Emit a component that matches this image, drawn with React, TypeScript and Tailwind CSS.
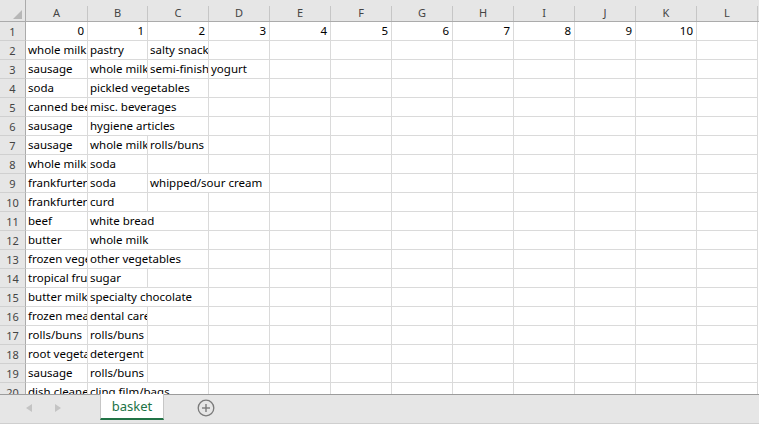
import React from "react";

type Cell = { t: string; w: string; right?: boolean; last?: boolean };

const COLS = ["A", "B", "C", "D", "E", "F", "G", "H", "I", "J", "K", "L"];
const COLW = [
  "w-[62px]",
  "w-[60px]",
  "w-[61px]",
  "w-[61px]",
  "w-[61px]",
  "w-[61px]",
  "w-[61px]",
  "w-[61px]",
  "w-[61px]",
  "w-[61px]",
  "w-[61px]",
  "w-[61px]",
];

// each row: list of [text, span] for columns A.. ; empty string = empty cell
type Spec = [string, number][];

const rows: Spec[] = [
  [["0", 1], ["1", 1], ["2", 1], ["3", 1], ["4", 1], ["5", 1], ["6", 1], ["7", 1], ["8", 1], ["9", 1], ["10", 1], ["", 1]],
  [["whole milk", 1], ["pastry", 1], ["salty snack", 1]],
  [["sausage", 1], ["whole milk", 1], ["semi-finished bread", 1], ["yogurt", 1]],
  [["soda", 1], ["pickled vegetables", 2]],
  [["canned beer", 1], ["misc. beverages", 2]],
  [["sausage", 1], ["hygiene articles", 2]],
  [["sausage", 1], ["whole milk", 1], ["rolls/buns", 1]],
  [["whole milk", 1], ["soda", 1]],
  [["frankfurter", 1], ["soda", 1], ["whipped/sour cream", 2]],
  [["frankfurter", 1], ["curd", 1]],
  [["beef", 1], ["white bread", 2]],
  [["butter", 1], ["whole milk", 2]],
  [["frozen vegetables", 1], ["other vegetables", 2]],
  [["tropical fruit", 1], ["sugar", 1]],
  [["butter milk", 1], ["specialty chocolate", 2]],
  [["frozen meals", 1], ["dental care", 1]],
  [["rolls/buns", 1], ["rolls/buns", 1]],
  [["root vegetables", 1], ["detergent", 1]],
  [["sausage", 1], ["rolls/buns", 1]],
  [["dish cleaner", 1], ["cling film/bags", 2]],
];

const SPAN2: Record<number, string> = {
  1: "w-[121px]",
  2: "w-[122px]",
};

function buildRow(spec: Spec, numeric: boolean): Cell[] {
  const cells: Cell[] = [];
  let col = 0;
  for (const [t, span] of spec) {
    const w = span === 2 ? SPAN2[col] : COLW[col];
    cells.push({ t, w, right: numeric });
    col += span;
  }
  while (col < 12) {
    cells.push({ t: "", w: COLW[col] });
    col++;
  }
  return cells;
}

const font = { fontFamily: '"Noto Sans", "Noto Sans CJK KR", sans-serif' };

export default function App() {
  return (
    <div className="w-[759px] h-[424px] bg-white flex flex-col overflow-hidden select-none" style={font}>
      {/* grid area */}
      <div className="h-[394px] overflow-hidden flex flex-col">
        {/* column header */}
        <div className="flex h-[22px] shrink-0 bg-[#e6e6e6] border-b border-[#ababab]">
          <div className="w-[26px] h-full border-r border-[#ababab] flex items-end justify-end pr-[3px] pb-[2px]">
            <svg width="9" height="9" viewBox="0 0 9 9">
              <polygon points="9,0 9,9 0,9" fill="#b7b7b7" />
            </svg>
          </div>
          {COLS.map((c, i) => (
            <div key={c} className={`${COLW[i]} h-full flex items-end`}>
              <div className="w-full h-[15px] border-r border-[#c6c6c6] flex items-center justify-center text-[11px] text-[#444] leading-none pb-[2px]">
                {c}
              </div>
            </div>
          ))}
        </div>
        {rows.map((spec, r) => {
          const cells = buildRow(spec, r === 0);
          return (
            <div key={r} className="flex h-[19px] shrink-0">
              <div className="w-[26px] h-full bg-[#e6e6e6] border-r border-[#ababab] border-b border-b-[#d0d0d0] flex items-center justify-center text-[11px] text-[#444] leading-none">
                {r + 1}
              </div>
              {cells.map((c, i) => (
                <div
                  key={i}
                  className={`${c.w} h-full shrink-0 border-r border-b border-[#dadada] overflow-hidden whitespace-nowrap flex items-center text-[11.5px] leading-none text-black ${
                    c.right ? "justify-end pr-[3px]" : "pl-[2px]"
                  }`}
                >
                  {c.t}
                </div>
              ))}
            </div>
          );
        })}
      </div>
      {/* tab bar */}
      <div className="h-[30px] shrink-0 bg-[#e6e6e6] border-t border-[#9c9c9c] border-b border-b-[#cfcfcf] flex items-start">
        <div className="w-[100px] h-[26px] flex items-center">
          <div className="w-[26px]" />
          <svg width="6" height="8" viewBox="0 0 6 8" className="ml-[0px]">
            <polygon points="6,0 6,8 0,4" fill="#c4c4c4" />
          </svg>
          <svg width="6" height="8" viewBox="0 0 6 8" className="ml-[23px]">
            <polygon points="0,0 0,8 6,4" fill="#c4c4c4" />
          </svg>
        </div>
        <div className="-mt-px w-[64px] h-[26px] bg-white border-x border-[#c6c6c6] border-b-2 border-b-[#217346] flex items-center justify-center text-[13px] text-[#217346] leading-none pt-[1px]">
          basket
        </div>
        <div className="h-[26px] flex items-center ml-[33px]">
          <svg width="18" height="18" viewBox="0 0 18 18">
            <circle cx="9" cy="9" r="7.8" fill="none" stroke="#7a7a7a" strokeWidth="1.3" />
            <line x1="9" y1="5" x2="9" y2="13" stroke="#7a7a7a" strokeWidth="1.4" />
            <line x1="5" y1="9" x2="13" y2="9" stroke="#7a7a7a" strokeWidth="1.4" />
          </svg>
        </div>
      </div>
    </div>
  );
}
